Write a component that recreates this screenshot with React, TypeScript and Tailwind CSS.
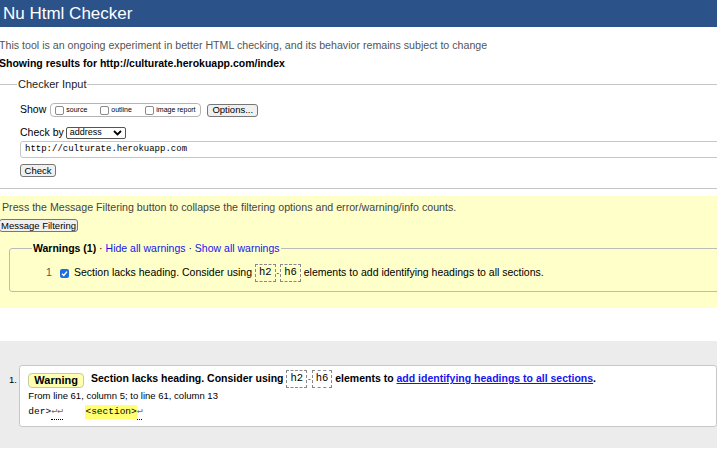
const sans = "font-['Liberation_Sans',Arial,sans-serif]";
const mono = "font-['Liberation_Mono','Courier_New',monospace]";

const Box = ({ checked = false }: { checked?: boolean }) =>
  checked ? (
    <span className="flex h-[9px] w-[9px] items-center justify-center rounded-[2px] bg-[#1d6fe0]">
      <svg width="7" height="7" viewBox="0 0 8 8">
        <path d="M1.2 4.2 3.2 6.2 6.8 1.8" fill="none" stroke="white" strokeWidth="1.6" />
      </svg>
    </span>
  ) : (
    <span className="h-[9px] w-[9px] rounded-[2px] border border-[#8a8a8a] bg-white" />
  );

const Code = ({ children }: { children: string }) => (
  <span className={`${mono} inline-flex h-[18px] items-center border border-dashed border-[#888] px-[3px] text-[10.5px]`}>
    {children}
  </span>
);

const Elems = () => (
  <span className="inline-flex items-center align-middle">
    <Code>h2</Code>
    <span className="mx-[1px] text-[8px]">-</span>
    <Code>h6</Code>
  </span>
);

const Button = ({ children, className = '' }: { children: string; className?: string }) => (
  <span
    className={`inline-flex h-[13px] items-center whitespace-nowrap rounded-[3px] border border-[#767676] bg-[#f0f0f0] px-[4px] text-[9.5px] leading-none ${className}`}
  >
    {children}
  </span>
);

export default function App() {
  return (
    <div className={`${sans} h-[453px] w-[717px] overflow-hidden bg-white text-[10.5px] text-black`}>
      <div className="flex h-[27px] items-center bg-[#2b5289] pl-[3px] text-[17px] text-white">Nu Html Checker</div>

      <div className="-ml-[1px] mt-[11px] whitespace-nowrap text-[10.65px] leading-[14px] text-[#555]">
        This tool is an ongoing experiment in better HTML checking, and its behavior remains subject to change
      </div>
      <div className="-ml-[1px] mt-[4px] whitespace-nowrap font-bold leading-[14px]">
        Showing results for http://culturate.herokuapp.com/index
      </div>

      <fieldset className="-ml-[4px] mt-[7px] w-[760px] border border-[#c6c6c6] pb-[11px] pl-[23px]">
        <legend className="ml-[-3px] px-[1px] text-[11px] leading-[14px] text-[#222]">Checker Input</legend>
        <div className="mt-[12px] flex h-[14px] items-center">
          <span className="mr-[4px]">Show</span>
          <span className="flex h-[14px] w-[151px] items-center rounded-[4px] border border-[#b5b5b5] pl-[4px] text-[7px]">
            <Box />
            <span className="ml-[2px] w-[34px]">source</span>
            <Box />
            <span className="ml-[2px] w-[34px]">outline</span>
            <Box />
            <span className="ml-[2px]">image report</span>
          </span>
          <Button className="ml-[6px] w-[51px] justify-center">Options...</Button>
        </div>
        <div className="mt-[9px] flex h-[13px] items-center">
          <span className="mr-[2px]">Check by</span>
          <span className="flex h-[12px] w-[60px] items-center justify-between rounded-[2px] border border-[#555] pl-[3px] pr-[3px] text-[9px]">
            address
            <svg width="9" height="6" viewBox="0 0 9 6">
              <path d="M1 1 4.5 4.5 8 1" fill="none" stroke="black" strokeWidth="1.8" />
            </svg>
          </span>
        </div>
        <div className={`${mono} mt-[2px] flex h-[17px] items-center rounded-[3px] border border-[#c6c6c6] pl-[4px] text-[9px]`}>
          http://culturate.herokuapp.com
        </div>
        <div className="mt-[6px] flex">
          <Button className="w-[36px] justify-center">Check</Button>
        </div>
      </fieldset>

      <div className="mt-[7px] h-[112px] bg-[#ffffc9] pt-[5px]">
        <div className="ml-[2px] whitespace-nowrap text-[10.65px] leading-[12px] text-[#444]">
          Press the Message Filtering button to collapse the filtering options and error/warning/info counts.
        </div>
        <div className="mt-[6px] flex">
          <Button className="-ml-[1px] w-[79px] justify-center">Message Filtering</Button>
        </div>
        <fieldset className="ml-[9px] mt-[9px] w-[740px] rounded-[3px] border border-[#bbb] pb-[9px] pl-[22px]">
          <legend className="px-[1px] leading-[14px]">
            <b>Warnings (1)</b> · <span className="text-[#1515ee]">Hide all warnings</span> ·{' '}
            <span className="text-[#1515ee]">Show all warnings</span>
          </legend>
          <div className="mt-[9px] flex h-[18px] items-center whitespace-nowrap">
            <span className="ml-[14px] w-[14px] text-[#555]">1</span>
            <Box checked />
            <span className="ml-[5px]">Section lacks heading. Consider using&nbsp;</span>
            <Elems />
            <span>&nbsp;elements to add identifying headings to all sections.</span>
          </div>
        </fieldset>
      </div>

      <div className="mt-[33px] h-[107px] bg-[#ececec] pt-[24px]">
        <div className="flex">
          <span className="ml-[9px] mt-[8px] w-[11px] text-[9.5px]">1.</span>
          <div className="h-[62px] w-[740px] rounded-[3px] border border-[#c8c8c8] bg-white pl-[8px] pt-[3px]">
            <div className="flex h-[20px] items-center whitespace-nowrap font-bold">
              <span className="mr-[7px] mt-[2px] flex h-[15px] items-center rounded-[4px] border border-[#c9c9a0] bg-[#ffffb0] px-[5px] text-[11px]">
                Warning
              </span>
              <span className="text-[10.5px]">Section lacks heading. Consider using&nbsp;</span>
              <span className="font-normal">
                <Elems />
              </span>
              <span className="text-[10.5px]">
                &nbsp;elements to <span className="text-[#1515ee] underline">add identifying headings to all sections</span>.
              </span>
            </div>
            <div className="mt-[1px] text-[9.5px] leading-[12px]">From line 61, column 5; to line 61, column 13</div>
            <div className={`${mono} mt-[4px] flex h-[12px] items-center whitespace-pre text-[9.5px]`}>
              <span>der&gt;</span>
              <span className="border-b border-dotted border-black text-[#666]">↵↵</span>
              <span>    </span>
              <span className="bg-[#ffff70]">&lt;section&gt;</span>
              <span className="border-b border-dotted border-black text-[#666]">↵</span>
            </div>
          </div>
        </div>
      </div>
    </div>
  );
}
